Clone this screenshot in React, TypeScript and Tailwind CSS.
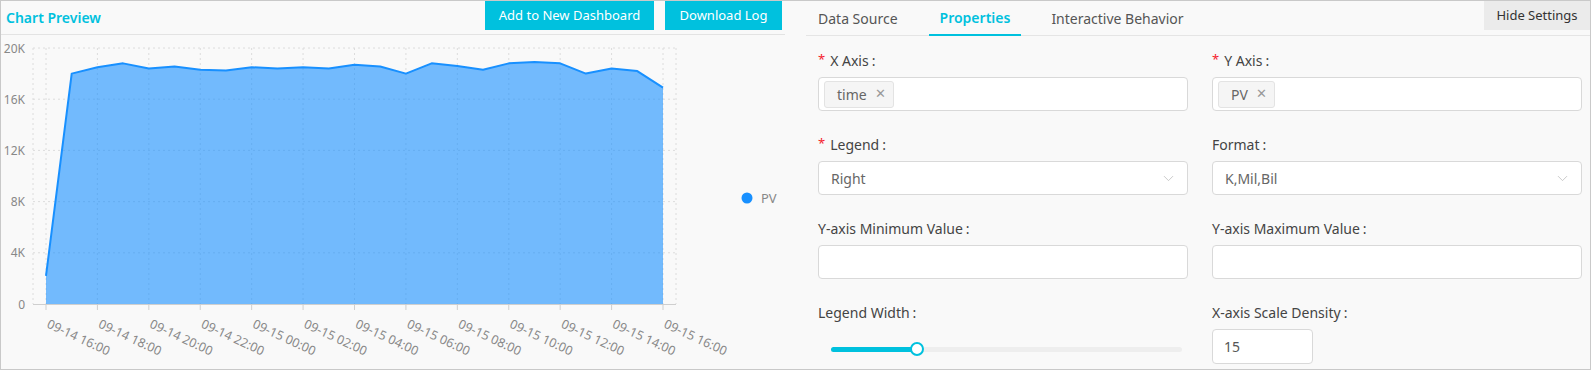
import { ChevronDown } from "lucide-react"

const data = [
  2200, 18000, 18500, 18800, 18400, 18550, 18300, 18250, 18500, 18400, 18500, 18400, 18700,
  18550, 18000, 18800, 18600, 18300, 18800, 18900, 18800, 18000, 18400, 18200, 16900,
]

const ticks = [
  "09-14 16:00",
  "09-14 18:00",
  "09-14 20:00",
  "09-14 22:00",
  "09-15 00:00",
  "09-15 02:00",
  "09-15 04:00",
  "09-15 06:00",
  "09-15 08:00",
  "09-15 10:00",
  "09-15 12:00",
  "09-15 14:00",
  "09-15 16:00",
]

const X0 = 46
const X1 = 663
const TOP = 48
const BASE = 304
const xAt = (i: number) => X0 + (i * (X1 - X0)) / (data.length - 1)
const yAt = (v: number) => BASE - (v / 20000) * (BASE - TOP)

function Chart() {
  const line = data.map((v, i) => `${i === 0 ? "M" : "L"}${xAt(i)},${yAt(v)}`).join(" ")
  const area = `${line} L${X1},${BASE} L${X0},${BASE} Z`
  const tickX = ticks.map((_, i) => X0 + (i * (X1 - X0)) / (ticks.length - 1))
  const yTicks = [20000, 16000, 12000, 8000, 4000, 0]

  return (
    <svg width={784} height={334} viewBox="1 35 784 334" className="block" style={{ fontFamily: "'Noto Sans', sans-serif" }}>
      {/* grid */}
      {yTicks.slice(0, 5).map((v) => (
        <line key={v} x1={33} x2={676} y1={yAt(v)} y2={yAt(v)} stroke="#dcdcdc" strokeDasharray="2 3" />
      ))}
      {[33, ...tickX, 676].map((x, i) => (
        <line key={i} x1={x} x2={x} y1={TOP} y2={BASE} stroke="#dcdcdc" strokeDasharray="2 3" />
      ))}
      <path d={area} fill="#1890ff" fillOpacity={0.6} />
      <path d={line} fill="none" stroke="#1890ff" strokeWidth={2} strokeLinejoin="round" />
      <line x1={33} x2={676} y1={BASE + 0.5} y2={BASE + 0.5} stroke="#cfcfcf" />
      {tickX.map((x, i) => (
        <line key={i} x1={x} x2={x} y1={BASE} y2={BASE + 6} stroke="#cfcfcf" />
      ))}
      {yTicks.map((v) => (
        <text key={v} x={25} y={yAt(v)} textAnchor="end" dominantBaseline="central" fontSize={12} fill="#888">
          {v === 0 ? "0" : `${v / 1000}K`}
        </text>
      ))}
      {ticks.map((t, i) => (
        <text
          key={t}
          x={tickX[i]}
          y={327}
          fontSize={12.5}
          fill="#888"
          transform={`rotate(25 ${tickX[i]} 327)`}
        >
          {t}
        </text>
      ))}
      <circle cx={747} cy={198} r={5.5} fill="#1890ff" />
      <text x={761} y={198} dominantBaseline="central" fontSize={13} fill="#888">
        PV
      </text>
    </svg>
  )
}

function Label({ text, required }: { text: string; required?: boolean }) {
  return (
    <div className="h-[20px] flex items-center text-[14px] text-[#444] mb-[7px]">
      {required && <span className="text-[#f5222d] mr-[5px] text-[13px]">*</span>}
      {text}
      <span className="ml-[3px]">:</span>
    </div>
  )
}

function TagInput({ tag }: { tag: string }) {
  return (
    <div className="h-[34px] bg-white border border-[#d9d9d9] rounded-[4px] flex items-center pl-[5px]">
      <span className="h-[27px] flex items-center pl-[12px] pr-[7px] bg-[#f5f5f5] border border-[#e3e3e3] rounded-[3px] text-[14px] text-[#666]">
        {tag}
        <span className="ml-[8px] text-[13px] text-[#999]">✕</span>
      </span>
    </div>
  )
}

function Select({ value }: { value: string }) {
  return (
    <div className="h-[34px] bg-white border border-[#d9d9d9] rounded-[4px] flex items-center justify-between pl-[12px] pr-[10px] text-[14px] text-[#666]">
      {value}
      <ChevronDown className="w-[17px] h-[17px] text-[#bbb]" strokeWidth={1.1} />
    </div>
  )
}

export default function App() {
  return (
    <div
      className="w-[1591px] h-[370px] border border-[#c9c9c9] bg-[#f9f9f9] flex overflow-hidden"
      style={{ fontFamily: "'Noto Sans', sans-serif" }}
    >
      <div className="w-[784px] shrink-0 flex flex-col">
        <div className="h-[34px] border-b border-[#e3e3e3] flex justify-between pl-[5px] pr-[3px]">
          <span className="self-center text-[14px] font-semibold text-[#00c1de]">Chart Preview</span>
          <div className="flex gap-[11px]">
            <button className="h-[29px] w-[169px] bg-[#00c1de] text-white text-[13px]">Add to New Dashboard</button>
            <button className="h-[29px] w-[117px] bg-[#00c1de] text-white text-[13px]">Download Log</button>
          </div>
        </div>
        <Chart />
      </div>

      <div className="flex-1 flex flex-col pl-[21px]">
        <div className="h-[35px] border-b border-[#e5e5e5] flex">
          <div className="px-3 flex items-center text-[14px] text-[#555]">Data Source</div>
          <div className="ml-[19px] px-[11px] flex items-center text-[14px] font-semibold text-[#00c1de] border-b-2 border-[#00c1de] -mb-px">
            Properties
          </div>
          <div className="ml-[19px] px-[11px] flex items-center text-[14px] text-[#555]">Interactive Behavior</div>
          <div className="ml-auto self-start h-[29px] w-[106px] bg-[#ebebeb] flex items-center justify-center text-[13px] text-[#333]">
            Hide Settings
          </div>
        </div>

        <div className="pt-[14px] pl-[12px] pr-[8px] grid grid-cols-2 gap-x-6 gap-y-[23px]">
          <div>
            <Label text="X Axis" required />
            <TagInput tag="time" />
          </div>
          <div>
            <Label text="Y Axis" required />
            <TagInput tag="PV" />
          </div>
          <div>
            <Label text="Legend" required />
            <Select value="Right" />
          </div>
          <div>
            <Label text="Format" />
            <Select value="K,Mil,Bil" />
          </div>
          <div>
            <Label text="Y-axis Minimum Value" />
            <div className="h-[34px] bg-white border border-[#d9d9d9] rounded-[4px]" />
          </div>
          <div>
            <Label text="Y-axis Maximum Value" />
            <div className="h-[34px] bg-white border border-[#d9d9d9] rounded-[4px]" />
          </div>
          <div>
            <Label text="Legend Width" />
            <div className="h-[34px] flex items-center pt-[6px] pl-[13px] pr-[6px]">
              <div className="relative flex-1 h-[5px] rounded-full bg-[#eeeeee]">
                <div className="h-full w-[86px] rounded-full bg-[#00c1de]" />
                <div className="absolute left-[79px] top-[-5px] w-[14px] h-[14px] rounded-full bg-white border-2 border-[#00c1de]" />
              </div>
            </div>
          </div>
          <div>
            <Label text="X-axis Scale Density" />
            <div className="h-[35px] w-[101px] bg-white border border-[#d9d9d9] rounded-[4px] flex items-center pl-[11px] text-[14px] text-[#555]">
              15
            </div>
          </div>
        </div>
      </div>
    </div>
  )
}
